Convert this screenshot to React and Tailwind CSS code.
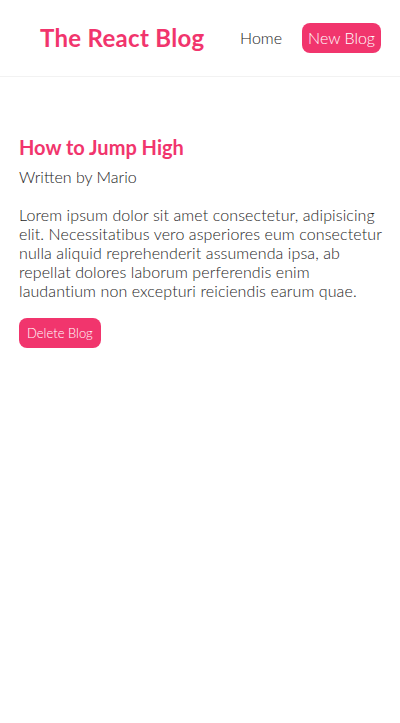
import React from 'react';

function Navbar() {
    return (
        <nav className="flex items-center h-[77px] pl-[40px] pr-[19px] border-b border-[#f2f2f2]">
            <h1 className="text-[24px] font-bold text-[#f1356d] tracking-[0.3px] leading-none">The React Blog</h1>
            <div className="ml-auto flex items-center">
                <a href="/" className="px-[6px] py-[6px] text-[#222] text-[16px] leading-[18px]">Home</a>
                <a href="/create" className="ml-[14px] px-[6px] py-[6px] text-white bg-[#f1356d] rounded-[8px] text-[16px] leading-[18px]">New Blog</a>
            </div>
        </nav>
    );
}

function BlogDetails() {
    return (
        <div className="px-[19px] pt-[58px]">
            <article>
                <h2 className="text-[20px] font-bold text-[#f1356d] leading-[24px]">How to Jump High</h2>
                <p className="mt-[6px] text-[16px] text-[#222] leading-[24px]">Written by Mario</p>
                <div className="mt-[16px] mb-[18px] mr-[-10px] text-[16px] text-[#1e1e1e] leading-[19px] tracking-[0.1px]">
                    Lorem ipsum dolor sit amet consectetur, adipisicing elit. Necessitatibus vero asperiores eum consectetur nulla aliquid reprehenderit assumenda ipsa, ab repellat dolores laborum perferendis enim laudantium non excepturi reiciendis earum quae.
                </div>
                <button className="bg-[#f1356d] text-white text-[13px] leading-[14px] px-[8px] py-[8px] rounded-[8px]">
                    Delete Blog
                </button>
            </article>
        </div>
    );
}

export default function App() {
    return (
        <div className="bg-white min-h-[723px] font-['Lato',sans-serif] font-light">
            <Navbar />
            <BlogDetails />
        </div>
    );
}
